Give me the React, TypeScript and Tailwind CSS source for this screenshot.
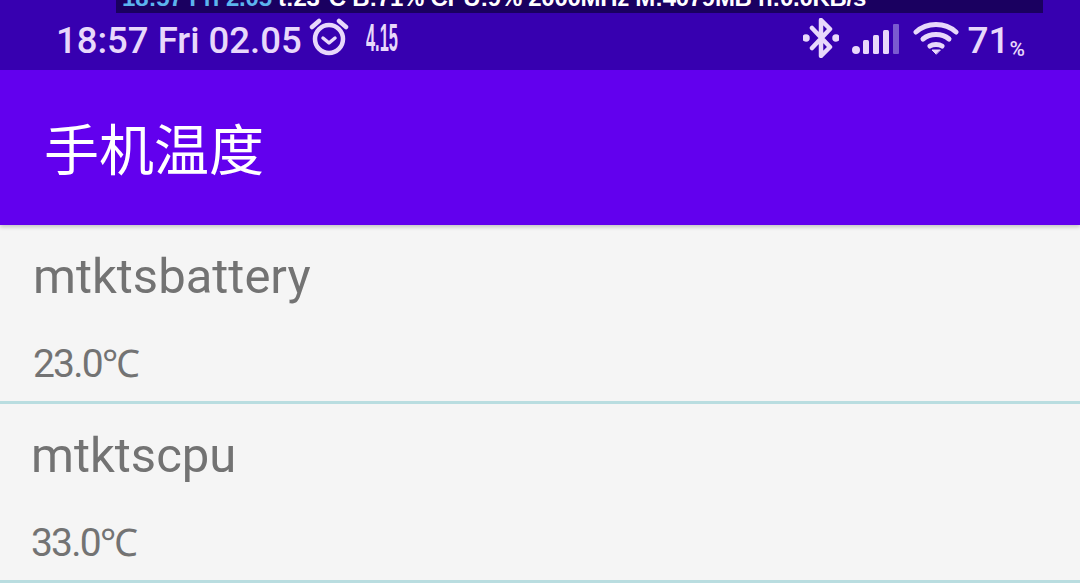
import React from "react";

const Row = ({ name, temp, unit, pad }: { name: string; temp: string; unit: string; pad: string }) => (
  <div className={`h-[179px] border-b-[3px] border-[#b9dde0] ${pad} text-[#737373] font-['Roboto',sans-serif]`}>
    <div className="pt-[24px] text-[49px] leading-[55px]">{name}</div>
    <div className="flex items-baseline pt-[39px] text-[39px] leading-[43px] tracking-[-1.8px]">
      <span>{temp}</span>
      <span className="text-[38px] tracking-[-5px] font-['Liberation_Sans',sans-serif]">{unit}</span>
    </div>
  </div>
);

export default function App() {
  return (
    <div className="h-[583px] w-[1080px] overflow-hidden bg-[#f5f5f5] font-['Roboto',sans-serif]">
      <div className="relative h-[70px] bg-[#3700b0]">
        <div className="absolute left-[116px] top-0 flex h-[13px] w-[927px] items-end overflow-hidden whitespace-nowrap bg-[#1a0060] pl-[6px] font-['Liberation_Sans',sans-serif] text-[24px] font-bold leading-[30px] text-white">
          <span className="tracking-[-0.15px] text-[#5cb4ee]">18:57 Fri 2.05</span>
          <span className="ml-[6px] tracking-[-0.3px]">t:23°C B:71% CPU:9% 2000MHz M:4079MB n:0.0KB/s</span>
        </div>
        <div className="flex h-full items-end pb-[8px] pl-[56px] pr-[55px] text-[#e8d8fb]">
          <span className="whitespace-nowrap text-[36.5px] font-medium leading-[42px]">18:57 Fri 02.05</span>
          <svg width="40" height="38" viewBox="0 0 40 38" className="mb-[6px] ml-[7px]" fill="none" stroke="#e8d8fb" strokeWidth="4.5" strokeLinecap="round" strokeLinejoin="round">
            <circle cx="20" cy="21" r="14" />
            <path d="M14 20l6 5 6-5" strokeWidth="3.5" />
            <path d="M3 9l7-6" />
            <path d="M37 9l-7-6" />
          </svg>
          <span className="mb-[6px] ml-[17px] w-[32px] origin-left scale-x-[0.42] font-['Liberation_Sans',sans-serif] text-[39px] font-bold leading-[36px]">4.15</span>
          <div className="flex-1" />
          <svg width="36" height="40" viewBox="0 0 36 40" className="mb-[4px]" fill="none" stroke="#e8d8fb" strokeWidth="4.5" strokeLinejoin="round" strokeLinecap="round">
            <path d="M9 10l18 19-9 9V2l9 9L9 30" />
            <circle cx="3" cy="20" r="1.5" fill="#e8d8fb" />
            <circle cx="33" cy="20" r="1.5" fill="#e8d8fb" />
          </svg>
          <svg width="48" height="30" viewBox="0 0 48 30" className="mb-[8px] ml-[13px]" fill="#e8d8fb">
            <rect x="0" y="22" width="8" height="8" rx="4" />
            <rect x="11" y="16" width="6" height="14" rx="1.5" />
            <rect x="21" y="11" width="6" height="19" rx="1.5" />
            <rect x="31" y="6" width="6" height="24" rx="1.5" />
            <rect x="41" y="0" width="6" height="30" rx="1" fill="#7a5ad0" />
          </svg>
          <svg width="46" height="34" viewBox="0 0 46 34" className="mb-[7px] ml-[13px]" fill="none" stroke="#e8d8fb" strokeWidth="5" strokeLinecap="round">
            <path d="M3 11c11-10 29-10 40 0" />
            <path d="M10 18c7-6 19-6 26 0" />
            <path d="M17 25c3-2 9-2 12 0" />
            <path d="M23 33l-4-4h8z" fill="#e8d8fb" strokeWidth="1" />
          </svg>
          <span className="ml-[8px] text-[37px] font-medium leading-[42px]">71</span>
          <span className="mb-[3px] text-[21px] font-medium leading-[20px]">%</span>
        </div>
      </div>
      <div className="flex h-[155px] items-center bg-[#6200ee] pb-[2px] pl-[44px] font-['Noto_Sans_CJK_SC',sans-serif] text-[55px] text-white shadow-[0_2px_4px_rgba(0,0,0,0.2)]">
        手机温度
      </div>
      <Row name="mtktsbattery" temp="23.0" unit="℃" pad="pl-[33px]" />
      <Row name="mtktscpu" temp="33.0" unit="℃" pad="pl-[31px]" />
    </div>
  );
}
